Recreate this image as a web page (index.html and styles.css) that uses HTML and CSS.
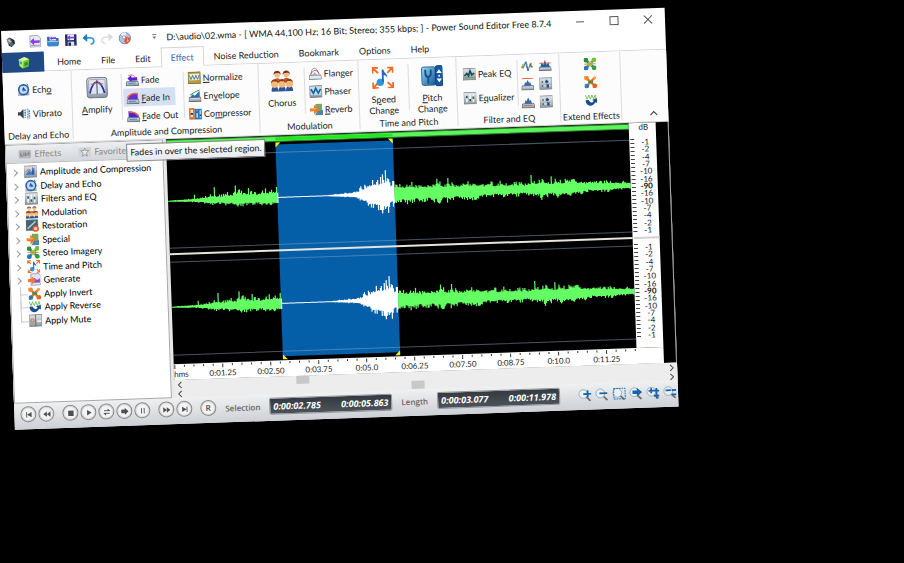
FILE: index.html
```
<!DOCTYPE html>
<html lang="en">
<head>
  <meta charset="UTF-8">
  <title>Power Sound Editor Free</title>
  <meta name="viewport" content="width=device-width, initial-scale=1.0">
  <link rel="stylesheet" href="styles.css">
</head>
<body>
  <svg class="sprite" aria-hidden="true">
    <defs>
      <linearGradient id="gPlate" x1="0" y1="0" x2="0" y2="1"><stop offset="0" stop-color="#e4e8ec"/><stop offset="1" stop-color="#8d97a1"/></linearGradient>
      <linearGradient id="gBlue" x1="0" y1="0" x2="1" y2="1"><stop offset="0" stop-color="#9fdcfb"/><stop offset="1" stop-color="#0f4f97"/></linearGradient>
    </defs>
    <symbol id="i-app" viewBox="0 0 16 16"><path d="M2 4l4-3 7 4 1 5-5 5-4-2z" fill="#23282c"/><path d="M2 4l4-2 4 5-3 4-3-1z" fill="#7f8a90"/><path d="M4 5l2-1 2 4-1 1z" fill="#d5dadd"/><circle cx="9" cy="11" r="3" fill="#516a72"/></symbol>
    <symbol id="i-new" viewBox="0 0 16 16"><path d="M2 1h10l3 3v11H2z" fill="#e9e8f4" stroke="#9d9cb4"/><path d="M2 8l5-4v3h7v3H7v3z" fill="#8b3fe0"/><path d="M3 13h11" stroke="#8f8fa8"/></symbol>
    <symbol id="i-open" viewBox="0 0 16 16"><path d="M1 3h5l1 2h8v9H1z" fill="#2c63a8"/><path d="M4 2h8v6H4z" fill="#e6e3fa"/><path d="M4 5l3-2v1h5v2H7v1z" fill="#7540d8"/><path d="M0 8h16l-2 7H2z" fill="#3f86cc"/><path d="M1 9h14" stroke="#b9defa"/></symbol>
    <symbol id="i-save" viewBox="0 0 16 16"><path d="M1 1h14v14H1z" fill="#1e2b66"/><path d="M4 1h8v7H4z" fill="#f0eefc"/><path d="M3 5l4-3v2h6v2H7v2z" fill="#7a45dd"/><path d="M4 10h8v5H4z" fill="#dde3f2"/><path d="M5 11h3v4H5z" fill="#16204c"/></symbol>
    <symbol id="i-undo" viewBox="0 0 16 16"><path d="M4 6h6c6 1 5 7 0 8" fill="none" stroke="#3798dc" stroke-width="2"/><path d="M0 6l6-5v10z" fill="#1d7fc8"/></symbol>
    <symbol id="i-redo" viewBox="0 0 16 16"><path d="M12 6H6c-6 1-5 7 0 8" fill="none" stroke="#e0e0e0" stroke-width="2"/><path d="M16 6l-6-5v10z" fill="#dcdcdc"/></symbol>
    <symbol id="i-disc" viewBox="0 0 16 16"><circle cx="8" cy="8" r="7" fill="#b4c5e4" stroke="#5870a8"/><path d="M8 8L3 3a7 7 0 0 1 7-2z" fill="#eef3fb"/><circle cx="7" cy="7" r="2" fill="#fff" stroke="#7a86a8"/><path d="M10 6l4 2v4l-4 3-3-3z" fill="#e24d22"/><path d="M11 7l2 5-3 1z" fill="#ffb469"/></symbol>
    <symbol id="i-cube" viewBox="0 0 16 16"><path d="M2 4l7-3 6 3-1 9-7 2-4-3z" fill="#6bc43c"/><path d="M2 4l6 2-1 9-4-3z" fill="#b7eb62"/><path d="M2 4l7-3 6 3-7 2z" fill="#dff79d"/><path d="M9 8l4-1v4l-4 1z" fill="#2f8c2e"/><path d="M3 6l3 1v3L3 9z" fill="#3da0d8"/></symbol>
    <symbol id="i-echo" viewBox="0 0 16 16"><rect x="1" y="11" width="14" height="4" fill="url(#gPlate)"/><circle cx="8" cy="8" r="6" fill="#b7d6f5" stroke="#2b5ea8" stroke-width="2"/><circle cx="8" cy="8" r="3" fill="#5b91d6" stroke="#eef6ff"/><path d="M8 5v3l3 1M12 1l2 2" stroke="#14386f" fill="none"/></symbol>
    <symbol id="i-vibrato" viewBox="0 0 16 16"><path d="M0 6h3l4-4v12l-4-4H0z" fill="#394047"/><path d="M9 3v10M14 4v10" stroke="#4a88bd" stroke-width="2" stroke-dasharray="2 1"/><path d="M12 2v13" stroke="#7fb59f" stroke-width="2" stroke-dasharray="2 1"/></symbol>
    <symbol id="i-amplify" viewBox="0 0 24 24"><rect x="1" y="1" width="22" height="22" rx="3" fill="url(#gPlate)" stroke="#66707a"/><rect x="3" y="3" width="18" height="16" rx="1" fill="#dfe7f2" stroke="#9aa7b8"/><path d="M4 18C8 2 16 2 20 18" fill="none" stroke="#2933b8" stroke-width="2"/><path d="M5 8h4l3-4 3 4h4" fill="none" stroke="#e0664a"/><path d="M12 4v15" stroke="#3b4754"/></symbol>
    <symbol id="i-amptree" viewBox="0 0 16 16"><rect x="0" y="1" width="16" height="14" fill="url(#gPlate)" stroke="#7b858e"/><path d="M2 12l4-6 3 3 4-6v9z" fill="#3f7ac4"/><path d="M2 8l4-3 3 2" stroke="#e05a3c" fill="none"/><path d="M11 3v9" stroke="#203a8c"/></symbol>
    <symbol id="i-fade" viewBox="0 0 16 16"><path d="M2 6l5-4v3h7v4H7v2z" fill="#5522d8"/><path d="M3 3c4-3 8 0 9 2" stroke="#e05a4c" fill="none"/><path d="M1 10h14l1 5H0z" fill="url(#gPlate)" stroke="#59636d"/><path d="M3 12h9" stroke="#2e6fc0"/></symbol>
    <symbol id="i-fadein" viewBox="0 0 16 16"><path d="M1 10c3-8 8-8 13-8v8z" fill="#6a2be0"/><path d="M1 8C5 2 9 2 14 3" stroke="#ef6338" stroke-width="2" fill="none"/><path d="M1 10h14l1 5H0z" fill="url(#gPlate)" stroke="#59636d"/><path d="M3 12h9" stroke="#2e6fc0"/></symbol>
    <symbol id="i-fadeout" viewBox="0 0 16 16"><path d="M15 10C12 3 8 3 2 2v8z" fill="#4c25d4"/><path d="M2 3c5 0 9 1 12 5" stroke="#ef6338" stroke-width="2" fill="none"/><path d="M1 10h14l1 5H0z" fill="url(#gPlate)" stroke="#59636d"/><path d="M3 12h9" stroke="#2e6fc0"/></symbol>
    <symbol id="i-normalize" viewBox="0 0 16 16"><rect x="0" y="1" width="16" height="14" fill="#b79c3d" stroke="#776426"/><rect x="2" y="3" width="12" height="8" fill="#e9eadb"/><path d="M2 5l2 5 2-5 2 5 2-5 2 5 2-5" fill="none" stroke="#386b93" stroke-width="1"/></symbol>
    <symbol id="i-envelope" viewBox="0 0 16 16"><path d="M2 10l3-4 3 2 6-6v8z" fill="#286fbb"/><path d="M2 7l5-3 7-3" stroke="#274" fill="none"/><path d="M1 10h14l1 5H0z" fill="url(#gPlate)" stroke="#4f5962"/></symbol>
    <symbol id="i-compressor" viewBox="0 0 16 16"><rect x="0" y="1" width="7" height="14" fill="#e0702a"/><path d="M2 3h3v9H2z" fill="#fbe3cf"/><rect x="7" y="2" width="9" height="13" fill="#2a74ba"/><path d="M9 4h2v9H9zM13 4h2v9h-2z" fill="#a9d8f5"/><path d="M2 8h3M9 6h2M13 10h2" stroke="#123f72" stroke-width="2"/></symbol>
    <symbol id="i-people" viewBox="0 0 24 24"><path d="M3 13c0-6 8-6 8 0zM13 13c0-6 8-6 8 0z" fill="#c05b25"/><circle cx="7" cy="5" r="3" fill="#f2bd84"/><circle cx="17" cy="5" r="3" fill="#f2bd84"/><path d="M3 5c0-6 8-6 8 0l-2-2H5zM13 5c0-6 8-6 8 0l-2-2h-4z" fill="#7c3416"/><path d="M0 23c0-8 8-8 8 0zM8 23c0-8 8-8 8 0zM16 23c0-8 8-8 8 0z" fill="#2c5696"/><circle cx="4" cy="15" r="4" fill="#f7b878"/><circle cx="12" cy="15" r="4" fill="#f7b878"/><circle cx="20" cy="15" r="4" fill="#f7b878"/><path d="M0 14c0-6 8-6 8 0l-2-2H2zM8 14c0-6 8-6 8 0l-2-2h-4zM16 14c0-6 8-6 8 0l-2-2h-4z" fill="#8d3b17"/></symbol>
    <symbol id="i-flanger" viewBox="0 0 16 16"><path d="M3 9c0-10 8-10 9-1" fill="none" stroke="#76869a"/><path d="M2 9c3-5 8-8 11 0" fill="none" stroke="#d5434f"/><path d="M1 10h14l1 5H0z" fill="#e7ebef" stroke="#66717c"/><path d="M4 10l3-4 4 4" fill="#a8b7c6"/></symbol>
    <symbol id="i-phaser" viewBox="0 0 16 16"><rect x="0" y="1" width="16" height="14" rx="1" fill="url(#gPlate)" stroke="#5d6770"/><rect x="2" y="3" width="12" height="9" fill="#bfe0f4"/><path d="M2 5l3 5 3-6 3 6 3-5" stroke="#15609f" stroke-width="2" fill="none"/></symbol>
    <symbol id="i-reverb" viewBox="0 0 16 16"><path d="M7 1h8v8H7z" fill="#76a85d"/><path d="M8 9h8v6H6l2-3z" fill="#4f86a8"/><path d="M0 6h5V2l7 6-7 6v-4H0z" fill="#ee7a24"/><path d="M1 7h7" stroke="#ffc98c"/></symbol>
    <symbol id="i-speed" viewBox="0 0 24 24"><path d="M1 7V1h6M1 1l6 6M23 7V1h-6M23 1l-6 6M1 17v6h6M1 23l6-6M23 17v6h-6M23 23l-6-6" stroke="#ef6c22" stroke-width="2" fill="none"/><circle cx="9" cy="17" r="4" fill="#2e96db"/><path d="M11 17V3h2c0 4 4 4 4 9-2-3-4-3-4-3v8z" fill="#1a6cb8"/></symbol>
    <symbol id="i-pitch" viewBox="0 0 24 24"><rect x="1" y="2" width="15" height="20" rx="2" fill="url(#gBlue)" stroke="#2e6a99"/><rect x="16" y="1" width="8" height="22" rx="2" fill="#17599f" stroke="#0f3b70"/><path d="M5 5v4c0 5 6 5 6 0V5M8 13v7" stroke="#10507f" stroke-width="2" fill="none"/><path d="M20 5l3 4h-6zM20 19l3-4h-6z" fill="#fff"/><circle cx="20" cy="12" r="1" fill="#fff"/></symbol>
    <symbol id="i-peak" viewBox="0 0 16 16"><rect x="0" y="1" width="16" height="14" fill="url(#gPlate)" stroke="#7b858e"/><path d="M2 10l3-3 2 3 2-6 2 5 3-2" stroke="#174a5e" stroke-width="2" fill="none"/><path d="M2 12h12" stroke="#5da03c"/></symbol>
    <symbol id="i-eq" viewBox="0 0 16 16"><rect x="0" y="1" width="16" height="14" fill="url(#gPlate)" stroke="#7b858e"/><path d="M4 3v10M8 3v10M12 3v10" stroke="#f4f6f7" stroke-width="2"/><path d="M3 5h2v3H3zM7 9h2v3H7zM11 6h2v3h-2z" fill="#2a5348"/></symbol>
    <symbol id="i-spike" viewBox="0 0 16 16"><path d="M3 5v6M13 4v6" stroke="#ccaa3a" stroke-width="2"/><path d="M0 9h4l2-6 3 11 3-9 1 4h3" stroke="#245b96" stroke-width="1" fill="none"/><path d="M7 2l2 11" stroke="#245b96"/></symbol>
    <symbol id="i-band" viewBox="0 0 16 16"><path d="M2 10l2-6 2 3 2-6 2 6 2-3 2 6z" fill="#2560a8"/><path d="M1 5h14" stroke="#db4633"/><path d="M1 10h14l1 4H0z" fill="url(#gPlate)" stroke="#5b656e"/></symbol>
    <symbol id="i-low" viewBox="0 0 16 16"><path d="M1 1h14" stroke="#e0492c" stroke-width="1"/><path d="M3 11l2-6 1 2 2-4 2 4 1-2 2 6z" fill="#2d69b3"/><path d="M1 10h14l1 5H0z" fill="url(#gPlate)" stroke="#5b656e"/></symbol>
    <symbol id="i-high" viewBox="0 0 16 16"><path d="M3 11l2-6 1 2 2-5 2 5 1-2 2 6z" fill="#2d69b3"/><path d="M1 10h14l1 5H0z" fill="url(#gPlate)" stroke="#5b656e"/><path d="M2 12h12" stroke="#d3564a"/></symbol>
    <symbol id="i-mixer" viewBox="0 0 16 16"><rect x="0" y="1" width="16" height="14" fill="url(#gPlate)" stroke="#818a93"/><path d="M2 6h12M2 11h12" stroke="#f2f5f7"/><path d="M9 3l3 3-3 2-2-2zM9 9h3v4H9z" fill="#214d8c"/><path d="M3 5h2v2H3zM3 10h2v2H3z" fill="#48525c"/></symbol>
    <symbol id="i-cross" viewBox="0 0 16 16"><path d="M3 3l10 10" stroke="#2c74b8" stroke-width="3"/><path d="M13 3L3 13" stroke="#3f9f3c" stroke-width="3"/><circle cx="3" cy="3" r="3" fill="#2e8e38"/><circle cx="13" cy="3" r="3" fill="#79bd43"/><circle cx="3" cy="13" r="3" fill="#2c74b8"/><circle cx="13" cy="13" r="3" fill="#3c9a3c"/><circle cx="8" cy="8" r="3" fill="#a8cf45"/><path d="M1 8h14" stroke="#e06536"/></symbol>
    <symbol id="i-invert" viewBox="0 0 16 16"><path d="M3 3l10 10M13 3L3 13" stroke="#ec7426" stroke-width="3"/><circle cx="3" cy="3" r="3" fill="#f28a34"/><circle cx="13" cy="13" r="3" fill="#e9641e"/><circle cx="13" cy="3" r="2" fill="#f7a24c"/><circle cx="3" cy="13" r="3" fill="#3578b5"/><path d="M5 8h6" stroke="#3c8f55" stroke-width="3"/></symbol>
    <symbol id="i-reverse" viewBox="0 0 16 16"><path d="M1 2l2 5 2-5 2 5 2-5 2 5 2-5 1 4" fill="none" stroke="#68b64d"/><path d="M1 8h4c1 4 5 4 6 1L9 8l6-2v6l-2-1c-4 7-12 4-12-3z" fill="#174d91"/></symbol>
    <symbol id="i-restore" viewBox="0 0 16 16"><rect x="0" y="1" width="15" height="13" fill="#44616c" stroke="#77858d"/><path d="M2 12l10-9" stroke="#a7c9ce" stroke-width="2"/><circle cx="12" cy="12" r="4" fill="#e9552e"/><circle cx="12" cy="12" r="2" fill="#ffd8c2"/></symbol>
    <symbol id="i-generate" viewBox="0 0 16 16"><path d="M4 1h10l2 2v12H4z" fill="#e4e2f3" stroke="#9492b4"/><path d="M7 8c2-6 3 5 8-2v6H7z" fill="#8050d0"/><path d="M0 7h5V4l5 5-5 5v-3H0z" fill="#ee7a35"/></symbol>
    <symbol id="i-mute" viewBox="0 0 16 16"><rect x="0" y="1" width="16" height="14" fill="url(#gPlate)" stroke="#72777b"/><path d="M8 1v14" stroke="#5a5f63"/><circle cx="4" cy="8" r="2" fill="none" stroke="#e4572d" stroke-width="1"/><path d="M10 9h5" stroke="#eef1f3" stroke-width="2"/></symbol>
    <symbol id="i-plug" viewBox="0 0 16 12"><rect x="0" y="1" width="16" height="10" rx="2" fill="#b4b6b9"/><path d="M3 4v4h3M7 4v4M9 4v4l4-4v4" stroke="#6d7074" stroke-width="1" fill="none"/></symbol>
    <symbol id="i-star" viewBox="0 0 16 12"><rect x="0" y="0" width="16" height="12" rx="1" fill="#d2d4d7"/><path d="M8 1l1 3h4L10 7l1 4-3-2-3 2 1-4-3-3h4z" fill="#e8e9eb" stroke="#909397"/></symbol>
    <symbol id="i-lens" viewBox="0 0 16 16"><path d="M9 10l5 5" stroke="#6c7075" stroke-width="2"/><circle cx="6" cy="7" r="5" fill="#e6f1fa" stroke="#9aa6b2"/></symbol>
  </svg>

  <div class="window">
    <header class="titlebar">
      <svg class="icon app-icon"><use href="#i-app"/></svg>
      <div class="quick-access">
        <button aria-label="New"><svg class="icon"><use href="#i-new"/></svg></button>
        <button aria-label="Open"><svg class="icon"><use href="#i-open"/></svg></button>
        <button aria-label="Save"><svg class="icon"><use href="#i-save"/></svg></button>
        <button aria-label="Undo"><svg class="icon"><use href="#i-undo"/></svg></button>
        <button aria-label="Redo"><svg class="icon"><use href="#i-redo"/></svg></button>
        <button aria-label="Burn disc"><svg class="icon"><use href="#i-disc"/></svg></button>
      </div>
      <button class="customize" aria-label="Customize toolbar"><svg viewBox="0 0 8 8"><path d="M2 2h4" stroke="#777"/><path d="M2 4h4L4 6z" fill="#666"/></svg></button>
      <h1>D:\audio\02.wma - [ WMA 44,100 Hz; 16 Bit; Stereo; 355 kbps; ] - Power Sound Editor Free 8.7.4</h1>
      <div class="window-controls">
        <button aria-label="Minimize"><svg viewBox="0 0 10 10"><path d="M1 5h8"/></svg></button>
        <button aria-label="Maximize"><svg viewBox="0 0 10 10"><path d="M1 1h8v8H1z"/></svg></button>
        <button aria-label="Close"><svg viewBox="0 0 10 10"><path d="M1 1l8 8M9 1L1 9"/></svg></button>
      </div>
    </header>

    <nav class="tabs">
      <button class="app-menu" aria-label="Application menu"><svg class="icon"><use href="#i-cube"/></svg></button>
      <a href="#">Home</a>
      <a href="#">File</a>
      <a href="#">Edit</a>
      <a href="#" class="active">Effect</a>
      <a href="#">Noise Reduction</a>
      <a href="#">Bookmark</a>
      <a href="#">Options</a>
      <a href="#">Help</a>
    </nav>

    <section class="ribbon">
      <div class="group group-delay">
        <div class="group-body">
          <div class="tools spaced">
            <button class="tool"><svg class="icon"><use href="#i-echo"/></svg><span>Ech<u>o</u></span></button>
            <button class="tool"><svg class="icon"><use href="#i-vibrato"/></svg><span>Vibrato</span></button>
          </div>
        </div>
        <div class="group-label">Delay and Echo</div>
      </div>
      <div class="group group-amplitude">
        <div class="group-body">
          <button class="tool-large"><svg><use href="#i-amplify"/></svg><span><u>A</u>mplify</span></button>
          <div class="tools divided">
            <button class="tool"><svg class="icon"><use href="#i-fade"/></svg><span>Fade</span></button>
            <button class="tool hovered"><svg class="icon"><use href="#i-fadein"/></svg><span><u>F</u>ade In</span></button>
            <button class="tool"><svg class="icon"><use href="#i-fadeout"/></svg><span><u>F</u>ade Out</span></button>
          </div>
          <div class="tools divided">
            <button class="tool"><svg class="icon"><use href="#i-normalize"/></svg><span><u>N</u>ormalize</span></button>
            <button class="tool"><svg class="icon"><use href="#i-envelope"/></svg><span>En<u>v</u>elope</span></button>
            <button class="tool"><svg class="icon"><use href="#i-compressor"/></svg><span>Co<u>m</u>pressor</span></button>
          </div>
        </div>
        <div class="group-label">Amplitude and Compression</div>
      </div>
      <div class="group group-modulation">
        <div class="group-body">
          <button class="tool-large"><svg><use href="#i-people"/></svg><span>Chorus</span></button>
          <div class="tools divided">
            <button class="tool"><svg class="icon"><use href="#i-flanger"/></svg><span>Flanger</span></button>
            <button class="tool"><svg class="icon"><use href="#i-phaser"/></svg><span>Phaser</span></button>
            <button class="tool"><svg class="icon"><use href="#i-reverb"/></svg><span><u>R</u>everb</span></button>
          </div>
        </div>
        <div class="group-label">Modulation</div>
      </div>
      <div class="group group-time">
        <div class="group-body">
          <button class="tool-large"><svg><use href="#i-speed"/></svg><span>S<u>p</u>eed<br>Change</span></button>
          <button class="tool-large divided"><svg><use href="#i-pitch"/></svg><span><u>P</u>itch<br>Change</span></button>
        </div>
        <div class="group-label">Time and Pitch</div>
      </div>
      <div class="group group-filter">
        <div class="group-body">
          <div class="tools spaced">
            <button class="tool"><svg class="icon"><use href="#i-peak"/></svg><span>Peak EQ</span></button>
            <button class="tool"><svg class="icon"><use href="#i-eq"/></svg><span>E<u>q</u>ualizer</span></button>
          </div>
          <div class="icon-grid divided">
            <button aria-label="Notch filter"><svg class="icon"><use href="#i-spike"/></svg></button>
            <button aria-label="Band pass filter"><svg class="icon"><use href="#i-band"/></svg></button>
            <button aria-label="Low pass filter"><svg class="icon"><use href="#i-low"/></svg></button>
            <button aria-label="Low shelf filter"><svg class="icon"><use href="#i-mixer"/></svg></button>
            <button aria-label="High pass filter"><svg class="icon"><use href="#i-high"/></svg></button>
            <button aria-label="High shelf filter"><svg class="icon"><use href="#i-mixer"/></svg></button>
          </div>
        </div>
        <div class="group-label">Filter and EQ</div>
      </div>
      <div class="group group-extend">
        <div class="group-body icon-column">
          <button aria-label="Stereo imagery"><svg class="icon"><use href="#i-cross"/></svg></button>
          <button aria-label="Invert"><svg class="icon"><use href="#i-invert"/></svg></button>
          <button aria-label="Reverse"><svg class="icon"><use href="#i-reverse"/></svg></button>
        </div>
        <div class="group-label">Extend Effects</div>
      </div>
      <button class="collapse" aria-label="Collapse ribbon"><svg viewBox="0 0 8 8"><path d="M1 6l3-3 3 3"/></svg></button>
    </section>

    <main class="workspace">
      <aside class="sidebar">
        <div class="side-tabs">
          <button><svg><use href="#i-plug"/></svg>Effects</button>
          <button><svg><use href="#i-star"/></svg>Favorites</button>
        </div>
        <div class="tooltip" role="tooltip">Fades in over the selected region.</div>
        <ul class="tree">
          <li class="parent"><svg class="icon"><use href="#i-amptree"/></svg>Amplitude and Compression</li>
          <li class="parent"><svg class="icon"><use href="#i-echo"/></svg>Delay and Echo</li>
          <li class="parent"><svg class="icon"><use href="#i-eq"/></svg>Filters and EQ</li>
          <li class="parent"><svg class="icon"><use href="#i-people"/></svg>Modulation</li>
          <li class="parent"><svg class="icon"><use href="#i-restore"/></svg>Restoration</li>
          <li class="parent"><svg class="icon"><use href="#i-reverb"/></svg>Special</li>
          <li class="parent"><svg class="icon"><use href="#i-cross"/></svg>Stereo Imagery</li>
          <li class="parent"><svg class="icon"><use href="#i-speed"/></svg>Time and Pitch</li>
          <li class="parent"><svg class="icon"><use href="#i-generate"/></svg>Generate</li>
          <li><svg class="icon"><use href="#i-invert"/></svg>Apply Invert</li>
          <li><svg class="icon"><use href="#i-reverse"/></svg>Apply Reverse</li>
          <li><svg class="icon"><use href="#i-mute"/></svg>Apply Mute</li>
        </ul>
      </aside>

      <div class="editor">
        <div class="view">
          <svg class="wave" viewBox="0 0 462 225" preserveAspectRatio="none">
            <rect x="0" y="1" width="462" height="5" fill="#5bf45b" stroke="#2b7a2b"/>
            <rect x="109" y="2" width="117" height="3" fill="#1fe81f"/>
            <rect x="109" y="9" width="117" height="212" fill="#045fa8"/>
            <path d="M0 17h462M0 109h462M0 123h462M0 216h462" stroke="#8aa7c4" stroke-opacity=".5"/>
            <path d="M0 115h462" stroke="#e6e4dc" stroke-width="2"/>
            <path d="M109 7h5l-5 5zM226 7h-5l5 5zM109 224h5l-5-5zM226 224h-5l5-5z" fill="#f5ee1e"/>
            <g id="channels"></g>
          </svg>
          <div class="db-ruler">
            <span class="unit">dB</span>
            <ol class="db-scale">
              <li>-1</li><li>-2</li><li>-4</li><li>-7</li><li>-10</li><li>-16</li><li class="zero">-90</li><li>-16</li><li>-10</li><li>-7</li><li>-4</li><li>-2</li><li>-1</li>
            </ol>
            <hr>
            <ol class="db-scale">
              <li>-1</li><li>-2</li><li>-4</li><li>-7</li><li>-10</li><li>-16</li><li class="zero">-90</li><li>-16</li><li>-10</li><li>-7</li><li>-4</li><li>-2</li><li>-1</li>
            </ol>
          </div>
          <div class="timeline">
            <svg class="ticks"><path id="timeTicks"/></svg>
            <span class="unit">hms</span>
            <span>0:01.25</span><span>0:02.50</span><span>0:03.75</span><span>0:05.0</span><span>0:06.25</span><span>0:07.50</span><span>0:08.75</span><span>0:10.0</span><span>0:11.25</span>
          </div>
        </div>
        <div class="scrollbar scroll-first">
          <button aria-label="Scroll left"><svg viewBox="0 0 8 8"><path d="M5 1L2 4l3 3"/></svg></button>
          <div class="track"><div class="thumb"></div></div>
          <button aria-label="Scroll right"><svg viewBox="0 0 8 8"><path d="M3 1l3 3-3 3"/></svg></button>
        </div>
        <div class="scrollbar scroll-second">
          <button aria-label="Scroll left"><svg viewBox="0 0 8 8"><path d="M5 1L2 4l3 3"/></svg></button>
          <div class="track"><div class="thumb"></div></div>
          <button aria-label="Scroll right"><svg viewBox="0 0 8 8"><path d="M3 1l3 3-3 3"/></svg></button>
        </div>
      </div>
    </main>

    <footer class="statusbar">
      <div class="transport">
        <button aria-label="Go to start"><svg viewBox="0 0 10 10"><path d="M2 2h1v6H2zM8 2v6L3 5z"/></svg></button>
        <button aria-label="Rewind"><svg viewBox="0 0 10 10"><path d="M5 2v6L1 5zM9 2v6L5 5z"/></svg></button>
        <button class="spaced" aria-label="Stop"><svg viewBox="0 0 10 10"><path d="M2 2h6v6H2z"/></svg></button>
        <button aria-label="Play"><svg viewBox="0 0 10 10"><path d="M3 2v6l5-3z"/></svg></button>
        <button aria-label="Loop"><svg viewBox="0 0 10 10"><path d="M2 3h4V1l3 3H2zM8 7H4v2L1 6h7z"/></svg></button>
        <button aria-label="Play from cursor"><svg viewBox="0 0 10 10"><path d="M1 3h4V1l4 4-4 4V7H1z"/></svg></button>
        <button aria-label="Pause"><svg viewBox="0 0 10 10"><path d="M3 2h1v6H3zM6 2h1v6H6z"/></svg></button>
        <button class="spaced" aria-label="Fast forward"><svg viewBox="0 0 10 10"><path d="M1 2v6l4-3zM5 2v6l4-3z"/></svg></button>
        <button aria-label="Go to end"><svg viewBox="0 0 10 10"><path d="M2 2v6l5-3zM7 2h1v6H7z"/></svg></button>
        <button class="spaced" aria-label="Record">R</button>
      </div>
      <span class="caption">Selection</span>
      <div class="display"><span>0:00:02.785</span><span>0:00:05.863</span></div>
      <span class="caption">Length</span>
      <div class="display"><span>0:00:03.077</span><span>0:00:11.978</span></div>
      <div class="zoom-tools">
        <button aria-label="Zoom in"><svg viewBox="0 0 16 16"><use href="#i-lens"/><path d="M6 7h9M11 3v8"/></svg></button>
        <button aria-label="Zoom out"><svg viewBox="0 0 16 16"><use href="#i-lens"/><path d="M5 7h9"/></svg></button>
        <button aria-label="Zoom to selection"><svg viewBox="0 0 16 16"><use href="#i-lens"/><path class="frame" d="M2 2h13v12H2z"/></svg></button>
        <button aria-label="Zoom full"><svg viewBox="0 0 16 16"><use href="#i-lens"/><path class="solid" d="M4 5h5V2l6 5-6 5V9H4z"/></svg></button>
        <button aria-label="Zoom in vertically"><svg viewBox="0 0 16 16"><use href="#i-lens"/><path d="M3 6h6M6 3v6M9 6h6M12 3v6M9 12h6M12 9v6"/></svg></button>
        <button aria-label="Zoom out vertically"><svg viewBox="0 0 16 16"><use href="#i-lens"/><path d="M3 6h6M10 6h5M10 11h5"/></svg></button>
      </div>
    </footer>
  </div>

  <script src="script.js"></script>
</body>
</html>
```
FILE: styles.css
```
* {
  margin: 0;
  padding: 0;
  box-sizing: border-box;
}

body {
  background: #000;
  min-height: 100vh;
  overflow: hidden;
  font-family: Lato, "Open Sans", sans-serif;
  font-size: 9px;
  line-height: 11px;
  color: #222;
}

button {
  border: none;
  background: none;
  font: inherit;
  color: inherit;
  display: flex;
  align-items: center;
  justify-content: center;
}

a {
  color: inherit;
  text-decoration: none;
}

ul, ol {
  list-style: none;
}

.sprite {
  position: absolute;
  width: 0;
  height: 0;
}

.icon {
  width: 13px;
  height: 13px;
  flex: none;
  display: block;
}

.window {
  width: 73.5%;
  margin: 31px 0 0 1px;
  background: #fff;
  transform: rotate(-2deg);
  transform-origin: 0 0;
}

/* Title bar */
.titlebar {
  display: flex;
  align-items: center;
  height: 22px;
  padding-left: 4px;
}

.app-icon {
  width: 11px;
  height: 11px;
}

.quick-access {
  display: flex;
  margin-left: 9px;
}

.quick-access button {
  width: 18px;
  height: 18px;
}

.customize {
  width: 12px;
  margin-left: 15px;
}

.customize svg {
  width: 8px;
  height: 8px;
}

.titlebar h1 {
  flex: 1;
  margin-left: 6px;
  font-size: 9px;
  font-weight: 400;
  color: #111;
  white-space: nowrap;
}

.window-controls {
  display: flex;
}

.window-controls button {
  width: 34px;
  height: 22px;
}

.window-controls svg {
  width: 10px;
  height: 10px;
  fill: none;
  stroke: #555;
}

/* Ribbon tabs */
.tabs {
  display: flex;
  height: 20px;
  border-bottom: 1px solid #d5d5d5;
}

.tabs a {
  height: 20px;
  padding: 0 10px;
  line-height: 21px;
  white-space: nowrap;
}

.tabs .app-menu {
  width: 42px;
  height: 20px;
  margin-right: 3px;
  background: #1f4a86;
}

.tabs .active {
  height: 20px;
  padding: 0 9px;
  background: #fff;
  border: 1px solid #d5d5d5;
  border-bottom: none;
  line-height: 19px;
  color: #2a62b0;
}

/* Ribbon */
.ribbon {
  display: flex;
  height: 72px;
  background: #fcfcfc;
  border-bottom: 1px solid #cfcfcf;
}

.group {
  flex: none;
  padding-top: 2px;
  border-right: 1px solid #dcdcdc;
  margin-bottom: 2px;
}

.group-delay {
  width: 69px;
}

.group-amplitude {
  width: 187px;
}

.group-modulation {
  width: 100px;
}

.group-time {
  width: 98px;
}

.group-filter {
  width: 103px;
}

.group-extend {
  width: 61px;
}

.group-body {
  display: flex;
  height: 54px;
}

.group-label {
  line-height: 16px;
  text-align: center;
  white-space: nowrap;
}

.tools {
  display: flex;
  flex-direction: column;
  align-items: flex-start;
  padding-left: 2px;
}

.tools.spaced {
  padding: 6px 0 6px 3px;
  gap: 6px;
}

.group-delay .tools {
  padding-left: 11px;
}

.tool {
  height: 18px;
  padding: 0 3px;
  gap: 2px;
  white-space: nowrap;
}

.tool.hovered {
  padding-right: 5px;
  background: #d5e1f2;
}

.tool-large {
  flex-direction: column;
  justify-content: flex-start;
  width: 49px;
  padding-top: 5px;
  gap: 5px;
}

.tool-large svg {
  width: 22px;
  height: 22px;
}

.group-amplitude .tools {
  width: 62px;
}

.group-modulation .tool-large {
  width: 45px;
}

.divided {
  background: linear-gradient(#dcdcdc, #dcdcdc) left top 3px / 1px 46px no-repeat;
}

.icon-grid {
  display: grid;
  grid-template-columns: 18px 18px;
  grid-auto-rows: 18px;
  padding-left: 2px;
  margin-left: auto;
  width: 43px;
}

.icon-column {
  flex-direction: column;
}

.icon-column button {
  height: 18px;
}

.collapse {
  align-self: flex-end;
  margin: 0 10px 4px auto;
}

.collapse svg {
  width: 9px;
  height: 9px;
}

.collapse path,
.scrollbar path {
  fill: none;
  stroke: #444;
  stroke-width: 1;
}

/* Workspace */
.workspace {
  display: flex;
  gap: 3px;
  background: #e9e9e9;
}

.sidebar {
  position: relative;
  width: 158px;
  background: #fff;
  border: 1px solid #a8a8a8;
}

.side-tabs {
  display: flex;
  height: 18px;
  background: linear-gradient(#eceef1, #d3d6db);
  border-bottom: 1px solid #b8bbc0;
  color: #888;
}

.side-tabs button {
  gap: 3px;
  padding-left: 12px;
  margin-right: 5px;
}

.side-tabs svg {
  width: 13px;
  height: 10px;
}

.tooltip {
  position: absolute;
  left: 120px;
  top: 2px;
  z-index: 2;
  height: 18px;
  padding: 0 3px;
  line-height: 16px;
  white-space: nowrap;
  color: #111;
  background: linear-gradient(#fff, #e8e9f0);
  border: 1px solid #888;
}

.tree {
  display: grid;
  grid-template-rows: repeat(12, 1fr);
  height: 162px;
  margin-top: 2px;
  color: #000;
}

.tree li {
  position: relative;
  display: flex;
  align-items: center;
  gap: 3px;
  padding-left: 17px;
  white-space: nowrap;
}

/* elbow lines for leaves, chevrons for folders */
.tree li::before {
  content: "";
  position: absolute;
  left: 9px;
  top: 0;
  width: 7px;
  height: 7px;
  border-left: 1px solid #ccc;
  border-bottom: 1px solid #ccc;
}

.tree li:not(.parent):not(:last-child)::after {
  content: "";
  position: absolute;
  left: 9px;
  top: 0;
  bottom: 0;
  border-left: 1px solid #ccc;
}

.tree .parent::before {
  left: 5px;
  top: 5px;
  width: 4px;
  height: 4px;
  border: solid #999;
  border-width: 1px 1px 0 0;
  transform: rotate(45deg);
}

.editor {
  flex: 1;
  min-width: 0;
}

.view {
  display: grid;
  grid-template-columns: 1fr 27px;
  grid-template-rows: 225px 16px;
  padding-right: 12px;
  border-right: 1px solid #aaa;
  background: #000;
}

.wave {
  width: 100%;
  height: 225px;
  display: block;
}

.db-ruler {
  background: #fff;
  font-size: 8px;
  line-height: 7px;
  color: #111;
  text-align: center;
  padding-left: 1px;
}

.db-ruler .unit {
  display: block;
  height: 16px;
  line-height: 9px;
}

.db-scale {
  display: grid;
  grid-template-rows: repeat(13, 1fr);
  align-items: center;
  height: 95px;
  padding: 0 3px 0 6px;
  background: repeating-linear-gradient(#444 0 1px, #fff 1px 4px) left top / 4px 100% no-repeat;
}

.db-scale .zero {
  font-weight: 700;
}

.db-ruler hr {
  border: none;
  height: 2px;
  margin: 3px 0 5px;
  background: #d0d0d0;
}

.timeline {
  position: relative;
  grid-column: 1 / 3;
  display: flex;
  background: #fff;
  color: #222;
  font-size: 8px;
  line-height: 20px;
}

.timeline span {
  width: 48px;
  text-align: center;
}

.timeline .unit {
  width: 25px;
  text-align: left;
}

.ticks {
  position: absolute;
  left: 0;
  top: 0;
  width: 100%;
  height: 5px;
}

.ticks path {
  stroke: #333;
}

.scrollbar {
  display: flex;
  height: 9px;
  background: #ededed;
}

.scrollbar button {
  width: 12px;
}

.scrollbar svg {
  width: 8px;
  height: 8px;
}

.scrollbar path {
  stroke-width: 1;
}

.track {
  flex: 1;
}

.thumb {
  width: 13px;
  height: 8px;
  background: #c8c8c8;
}

.scroll-first .thumb {
  margin-left: 23%;
}

.scroll-second .thumb {
  margin-left: 47%;
}

/* Status bar */
.statusbar {
  display: flex;
  align-items: center;
  height: 26px;
  padding: 0 0 4px 6px;
  background: linear-gradient(#eff0f1, #cdd0d5);
}

.transport {
  display: flex;
  gap: 2px;
}

.transport button {
  width: 16px;
  height: 16px;
  border: 1px solid #888;
  border-radius: 50%;
  background: #f4f4f5;
  box-shadow: inset 0 0 1px 1px #d4d4d6;
  font-size: 8px;
  font-weight: 700;
  color: #555;
}

.transport .spaced {
  margin-left: 6px;
}

.transport svg {
  width: 9px;
  height: 9px;
  fill: #505050;
}

.caption {
  margin: 0 9px;
  font-family: "Open Sans", sans-serif;
  font-size: 8px;
  font-weight: 600;
  color: #666;
}

.display {
  display: flex;
  align-items: center;
  justify-content: space-between;
  width: 123px;
  height: 17px;
  padding: 0 3px;
  background: linear-gradient(#343a40, #4b5259);
  border: 1px solid #90959b;
  border-radius: 2px;
  font-family: "Open Sans", sans-serif;
  font-size: 9px;
  font-style: italic;
  font-weight: 700;
  color: #fff;
}

.zoom-tools {
  display: flex;
  margin-left: auto;
}

.zoom-tools button {
  width: 17px;
  height: 16px;
}

.zoom-tools svg {
  width: 14px;
  height: 14px;
}

.zoom-tools path {
  fill: none;
  stroke: #1763a8;
  stroke-width: 2;
}

.zoom-tools .frame {
  stroke-width: 1;
  stroke-dasharray: 2 1;
}

.zoom-tools .solid {
  fill: #1763a8;
  stroke: none;
}
```
FILE: script.js
```
// loudness over the clip: [x, half height]
const envelope = [
  [0, 0], [20, 1], [32, 2], [45, 4], [58, 6], [75, 6], [92, 7], [109, 7],
  [110, 0], [158, 0], [176, 1.5], [188, 3], [194, 9], [204, 13], [212, 18], [218, 21], [223, 15],
  [226, 11], [232, 9], [270, 9], [300, 8], [335, 6], [352, 6], [372, 8], [395, 8], [420, 5], [445, 4], [462, 3]
];

const spikes = { 26: 5, 46: 12, 67: 13, 80: 10, 108: 10, 279: 13, 362: 13, 382: 11, 217: 23 };

function level(x) {
  for (let i = 1; i < envelope.length; i++) {
    const [x1, y1] = envelope[i - 1];
    const [x2, y2] = envelope[i];
    if (x <= x2) return y1 + (y2 - y1) * (x - x1) / (x2 - x1);
  }
  return 3;
}

let seed = 7;
function random() {
  seed = (seed * 16807) % 2147483647;
  return seed / 2147483647;
}

// the swell moves slowly, the jitter changes on every bar
function bars(from, to, middle) {
  let d = '';
  for (let x = from; x < to; x++) {
    const swell = 0.85 + 0.18 * Math.sin(x / 3) * Math.sin(x / 7 + 1);
    const l = level(x) * swell;
    const up = spikes[x] || l * (0.6 + random() * random() * 0.9);
    const down = l * (0.7 + random() * random() * 0.8);
    d += `M${x + 0.5} ${(middle - up - 0.5).toFixed(1)}V${(middle + down + 0.5).toFixed(1)}`;
  }
  return d;
}

function addPath(d, color) {
  const path = document.createElementNS('http://www.w3.org/2000/svg', 'path');
  path.setAttribute('d', d);
  path.setAttribute('stroke', color);
  path.setAttribute('stroke-width', 1.2);
  document.getElementById('channels').appendChild(path);
}

[62, 168].forEach(middle => {
  seed = 7;
  addPath(bars(0, 109, middle), '#63ff63');
  addPath(bars(109, 226, middle), '#fff');
  addPath(bars(226, 462, middle), '#63ff63');
});

let ticks = '';
for (let i = 0; i < 49; i++) {
  ticks += `M${1 + i * 9.6} 1v${i % 5 === 0 ? 4 : 2}`;
}
document.getElementById('timeTicks').setAttribute('d', ticks);
```
